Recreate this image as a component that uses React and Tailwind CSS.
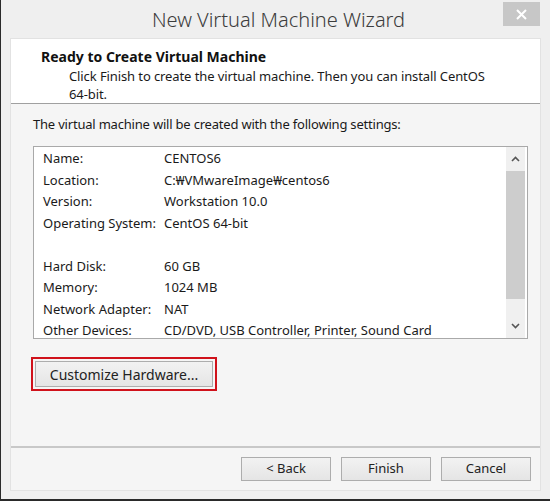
import React from "react";

const rows = [
  ["Name:", "CENTOS6"],
  ["Location:", "C:\u20A9VMwareImage\u20A9centos6"],
  ["Version:", "Workstation 10.0"],
  ["Operating System:", "CentOS 64-bit"],
  null,
  ["Hard Disk:", "60 GB"],
  ["Memory:", "1024 MB"],
  ["Network Adapter:", "NAT"],
  ["Other Devices:", "CD/DVD, USB Controller, Printer, Sound Card"],
];

function Btn({ children, className = "" }) {
  return (
    <div
      className={
        "flex items-center justify-center border border-[#adadad] bg-gradient-to-b from-[#f2f2f2] to-[#e5e5e5] text-[#222] " +
        className
      }
    >
      {children}
    </div>
  );
}

export default function App() {
  return (
    <div
      className="w-[550px] h-[501px] bg-[#2a2a2a] p-[1px] pb-[2px] pr-0 pt-0"
      style={{ fontFamily: '"Noto Sans", "Open Sans", "Noto Sans CJK KR", sans-serif' }}
    >
      <div className="w-full h-full bg-[#efefef] flex flex-col px-[9px] pb-[8px]">
        {/* title bar */}
        <div className="h-[38px] flex items-start relative">
          <div className="flex-1 text-center text-[20px] text-[#3c3c3c] pt-[7px] leading-[26px] font-light pl-[6px]">
            New Virtual Machine Wizard
          </div>
          <div className="absolute right-[1px] top-[2px] w-[37px] h-[24px] bg-[#c7c7c7] flex items-center justify-center">
            <svg width="11" height="11" viewBox="0 0 11 11">
              <path d="M1 1 L10 10 M10 1 L1 10" stroke="#ffffff" strokeWidth="2" />
            </svg>
          </div>
        </div>
        {/* content */}
        <div className="flex-1 flex flex-col border border-[#e2e2e2] bg-[#f5f5f5]">
          {/* header */}
          <div className="h-[65px] bg-white border-b border-[#a0a0a0] pl-[30px] pt-[8px] text-[13px] text-[#1a1a1a]">
            <div className="font-bold leading-[20px] text-[14px] text-[#111]">Ready to Create Virtual Machine</div>
            <div className="pl-[28px] leading-[18px] tracking-[-0.1px]">
              Click Finish to create the virtual machine. Then you can install CentOS
              <br />
              64-bit.
            </div>
          </div>
          {/* body */}
          <div className="flex-1 flex flex-col px-[22px] pt-[10px]">
            <div className="text-[13px] text-[#1a1a1a] leading-[20px] tracking-[-0.2px]">
              The virtual machine will be created with the following settings:
            </div>
            <div className="mt-[12px] h-[193px] w-[495px] bg-white border border-[#a9a9a9] flex">
              <div className="flex-1 pl-[9px] pt-[1px]">
                {rows.map((r, i) =>
                  r ? (
                    <div key={i} className="flex h-[21.5px] items-center text-[13px] text-[#1a1a1a]">
                      <div className="w-[121px]">{r[0]}</div>
                      <div>{r[1]}</div>
                    </div>
                  ) : (
                    <div key={i} className="h-[21.5px]" />
                  )
                )}
              </div>
              <div className="w-[19px] mr-[2px] flex flex-col bg-[#f0f0f0]">
                <div className="h-[24px] flex items-center justify-center">
                  <svg width="9" height="6" viewBox="0 0 9 6">
                    <path d="M1 5 L4.5 1.5 L8 5" stroke="#555" strokeWidth="1.6" fill="none" />
                  </svg>
                </div>
                <div className="h-[128px] bg-[#cdcdcd]" />
                <div className="flex-1" />
                <div className="h-[24px] flex items-center justify-center">
                  <svg width="9" height="6" viewBox="0 0 9 6">
                    <path d="M1 1 L4.5 4.5 L8 1" stroke="#555" strokeWidth="1.6" fill="none" />
                  </svg>
                </div>
              </div>
            </div>
            <div className="mt-[18px] -ml-[2px] w-[186px] h-[34px] border-2 border-[#d0121b] p-[2px]">
              <Btn className="h-full text-[14px]">Customize Hardware...</Btn>
            </div>
            <div className="flex-1" />
          </div>
          <div className="h-[44px] border-t-2 border-[#c8c8c8] flex justify-end items-start pt-[9px] pr-[9px] gap-[10px]">
            <Btn className="w-[90px] h-[24px] text-[13px]">&lt; Back</Btn>
            <Btn className="w-[90px] h-[24px] text-[13px]">Finish</Btn>
            <Btn className="w-[90px] h-[24px] text-[13px]">Cancel</Btn>
          </div>
        </div>
      </div>
    </div>
  );
}
